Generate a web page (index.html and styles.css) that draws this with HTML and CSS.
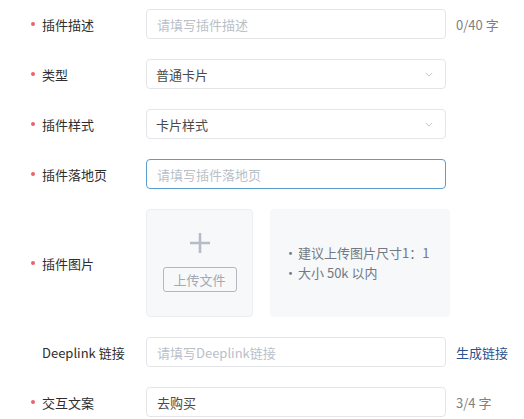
FILE: index.html
```html
<!DOCTYPE html>
<html lang="zh-CN">
<head>
<meta charset="utf-8">
<link rel="stylesheet" href="styles.css">
</head>
<body>
<div class="form">
  <div class="row">
    <div class="label req">插件描述</div>
    <div class="input placeholder">请填写插件描述</div>
    <div class="extra">0/40 字</div>
  </div>
  <div class="row">
    <div class="label req">类型</div>
    <div class="input select">普通卡片<svg class="chev" viewBox="0 0 10 6" width="8" height="5"><path d="M1 1 L5 5 L9 1" fill="none" stroke="#b8bcc3" stroke-width="1.1"/></svg></div>
  </div>
  <div class="row">
    <div class="label req">插件样式</div>
    <div class="input select">卡片样式<svg class="chev" viewBox="0 0 10 6" width="8" height="5"><path d="M1 1 L5 5 L9 1" fill="none" stroke="#b8bcc3" stroke-width="1.1"/></svg></div>
  </div>
  <div class="row">
    <div class="label req">插件落地页</div>
    <div class="input placeholder focus">请填写插件落地页</div>
  </div>
  <div class="row tall">
    <div class="label req">插件图片</div>
    <div class="upload">
      <svg class="plus" viewBox="0 0 20 20" width="20" height="20"><path d="M10 0 V20 M0 10 H20" stroke="#b5bcc8" stroke-width="2.6"/></svg>
      <div class="upbtn">上传文件</div>
    </div>
    <div class="tips">
      <div><span class="dot">•</span>建议上传图片尺寸1<span class="colon">：</span>1</div>
      <div><span class="dot">•</span>大小 50k 以内</div>
    </div>
  </div>
  <div class="row">
    <div class="label">Deeplink 链接</div>
    <div class="input placeholder">请填写Deeplink链接</div>
    <div class="extra link">生成链接</div>
  </div>
  <div class="row">
    <div class="label req">交互文案</div>
    <div class="input">去购买</div>
    <div class="extra">3/4 字</div>
  </div>
</div>
</body>
</html>
```
FILE: styles.css
```css
html, body {
  margin: 0;
  padding: 0;
  background: #ffffff;
}
body {
  font-family: "Noto Sans CJK SC", "Liberation Sans", sans-serif;
  font-size: 13px;
  color: #333;
}
.form {
  display: flex;
  flex-direction: column;
  gap: 20px;
  padding-top: 9px;
}
.row {
  display: flex;
  align-items: center;
  height: 30px;
}
.row.tall {
  height: 108px;
}
.label {
  width: 146px;
  box-sizing: border-box;
  padding-left: 42px;
  position: relative;
  color: #2e2e2e;
  flex-shrink: 0;
}
.label.req::before {
  content: "";
  position: absolute;
  left: 31px;
  top: 50%;
  width: 4px;
  height: 4px;
  margin-top: -2px;
  border-radius: 50%;
  background: #e8636c;
}
.input {
  width: 300px;
  height: 30px;
  box-sizing: border-box;
  border: 1px solid #e3e5e9;
  border-radius: 4px;
  padding: 0 10px;
  display: flex;
  align-items: center;
  justify-content: space-between;
  color: #4a4a4a;
}
.select {
  padding-left: 9px;
}
.placeholder {
  color: #b9bfc9;
}
.focus {
  border-color: #5d9dce;
}
.chev {
  margin-right: 2px;
}
.extra {
  margin-left: 10px;
  color: #808080;
}
.link {
  color: #2a528e;
}
.upload {
  width: 107px;
  height: 108px;
  box-sizing: border-box;
  border: 1px solid #eceef1;
  border-radius: 4px;
  background: #f7f8fa;
  display: flex;
  flex-direction: column;
  align-items: center;
  padding-top: 23px;
  gap: 14px;
}
.upbtn {
  width: 74px;
  height: 25px;
  box-sizing: border-box;
  border: 1px solid #b3b8c0;
  border-radius: 3px;
  display: flex;
  align-items: center;
  justify-content: center;
  color: #a3a8b1;
  font-size: 13px;
}
.tips {
  margin-left: 17px;
  width: 180px;
  height: 108px;
  box-sizing: border-box;
  background: #f7f8fa;
  border-radius: 4px;
  padding-left: 14px;
  display: flex;
  flex-direction: column;
  justify-content: center;
  line-height: 20px;
  color: #737983;
}
.dot {
  margin-right: 1px;
}
.colon {
  font-family: "Noto Sans CJK TC", "Noto Sans CJK SC", sans-serif;
}
```
